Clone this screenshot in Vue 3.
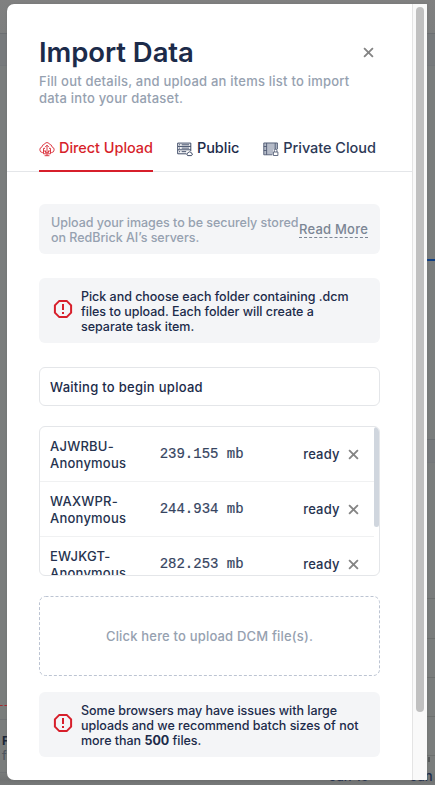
<script setup>
const files = [
  { id: 'AJWRBU-', size: '239.155 mb' },
  { id: 'WAXWPR-', size: '244.934 mb' },
  { id: 'EWJKGT-', size: '282.253 mb' },
]
</script>

<template>
  <div class="screen">
    <div class="page" aria-hidden="true">
      <div class="band band-top"></div>
      <div class="band band-mid"></div>
      <div class="blue-line"></div>
      <div class="grid"><i></i><i></i><i></i><i></i><i></i></div>
      <div class="red-line"></div>
      <div class="side-card"><b>F</b><span>f</span></div>
      <div class="date date-a">Jan 16</div>
      <div class="date date-b">Jan 17</div>
      <div class="tick"></div>
    </div>

    <section class="modal">
      <div class="body">
        <header class="head">
          <div class="title-row">
            <h1>Import Data</h1>
            <svg class="close" viewBox="0 0 10 10"><path d="M1 1L9 9M9 1L1 9" /></svg>
          </div>
          <p class="sub">Fill out details, and upload an items list to import<br />data into your dataset.</p>
        </header>

        <nav class="tabs">
          <div class="tab active">
            <svg class="icon" viewBox="0 0 16 16">
              <path d="M4.3 11.6H3.5A2.9 2.9 0 0 1 3 5.9 2.6 2.6 0 0 1 5.3 3.4 2.9 2.9 0 0 1 10.7 3.4 2.6 2.6 0 0 1 13 5.9 2.9 2.9 0 0 1 12.5 11.6H11.7" />
              <path d="M8 9V4.3M6 6.2L8 4.2l2 2M6 7.4H4.5v5.4h7V7.4H10M4.5 10h7M6.5 10v1.6h3V10M5.6 14.7h4.8M8 12.8v1.9" />
            </svg>
            <span>Direct Upload</span>
          </div>
          <div class="tab">
            <svg class="icon" viewBox="0 0 16 16">
              <path d="M.7 2.1h13.1v3.3H.7zM.7 5.4v3.4h13.1V5.4M.7 8.8v4h8.6M13.8 8.8v1.4M2 3.8h1.2M4.6 3.8h7.6M2 7.1h1.2M4.6 7.1h7.6M2 10.7h1.2M4.6 10.7h4.6" />
              <path d="M10.8 14.6a1.4 1.4 0 0 1 .3-2.7 1.6 1.6 0 0 1 3 0 1.4 1.4 0 0 1 .3 2.7z" />
            </svg>
            <span>Public</span>
          </div>
          <div class="tab private">
            <svg class="icon dim" viewBox="0 0 16 16">
              <path class="shade" d="M.5 1.8h14.2v7H10v5H.5z" />
              <path d="M.8 2h13.6v6M.8 2v11.8h8.4M3.6 2v11.8M.8 5.5h2.8M.8 9.5h2.8M12.2 2v6" />
              <path d="M10.4 11h4.5v3.5h-4.5zM11.3 11V9.5a1.3 1.3 0 0 1 2.6 0V11" />
            </svg>
            <span>Private Cloud</span>
          </div>
        </nav>

        <main class="content">
          <div class="info">
            <p>Upload your images to be securely stored<br />on RedBrick AI’s servers.</p>
            <a>Read More</a>
          </div>

          <div class="notice">
            <svg viewBox="0 0 20 20"><path d="M6.3 1.9h7.4l4.4 4.4v7.4l-4.4 4.4H6.3l-4.4-4.4V6.3z" /><path d="M10 5v6M10 13v2" /></svg>
            <p>Pick and choose each folder containing .dcm<br />files to upload. Each folder will create a<br />separate task item.</p>
          </div>

          <div class="status">Waiting to begin upload</div>

          <div class="files">
            <div class="rows">
              <div v-for="f in files" :key="f.id" class="row">
                <div class="name">{{ f.id }}<br />Anonymous</div>
                <div class="size">{{ f.size }}</div>
                <div class="ready">ready</div>
                <svg class="close" viewBox="0 0 10 10"><path d="M1 1L9 9M9 1L1 9" /></svg>
              </div>
            </div>
            <div class="files-thumb"></div>
          </div>

          <div class="drop">
            <svg class="dash"><rect x="0.5" y="0.5" width="340" height="79" rx="6" /></svg>
            <span>Click here to upload DCM file(s).</span>
          </div>

          <div class="notice last">
            <svg viewBox="0 0 20 20"><path d="M6.3 1.9h7.4l4.4 4.4v7.4l-4.4 4.4H6.3l-4.4-4.4V6.3z" /><path d="M10 5v6M10 13v2" /></svg>
            <p>Some browsers may have issues with large<br />uploads and we recommend batch sizes of not<br />more than <b>500</b> files.</p>
          </div>
        </main>
      </div>
      <div class="track"><div class="thumb"></div></div>
    </section>
  </div>
</template>

<style>
body { margin: 0; overflow: hidden; }
</style>

<style scoped>
* { box-sizing: border-box; }
h1, p { margin: 0; }
.screen {
  position: relative;
  width: 435px;
  height: 785px;
  overflow: hidden;
  padding: 4px 8px 5px 7px;
  background: #7c7e7e;
  color: #1c2b4a;
  font-family: Inter, "Liberation Sans", sans-serif;
  font-weight: 500;
  white-space: nowrap;
}
.page { position: absolute; inset: 0; background: linear-gradient(#808080, #7a7d7d 60px, #7a7d7c 770px, #717373 780px, #777979); }
.band { position: absolute; left: 0; right: 0; border-top: 1px solid #6c6f72; border-bottom: 1px solid #74777a; background: #777a7c; }
.band-top { top: 33px; height: 33px; }
.band-mid { top: 439px; height: 24px; left: 427px; }
.blue-line { position: absolute; left: 427px; right: 0; top: 259px; height: 2px; background: #103f83; }
.grid { position: absolute; left: 427px; right: 0; top: 560px; display: flex; flex-direction: column; }
.grid i { height: 39.3px; border-bottom: 1px solid #6d706f; }
.red-line { position: absolute; left: 0; top: 705px; width: 7px; border-top: 1px dashed #a52a30; }
.side-card { position: absolute; left: 0; top: 719px; width: 187px; height: 54px; padding: 13px 0 0 2px; border: 1px solid #707375; border-left: 0; display: flex; flex-direction: column; font-size: 12px; line-height: 15px; color: #1b2638; }
.side-card span { color: #4c555f; }
.date { position: absolute; top: 769px; font-size: 13px; line-height: 15px; }
.date-a { left: 329px; }
.date-b { left: 410px; }
.tick { position: absolute; left: 428px; top: 757px; width: 2px; height: 5px; background: #555858; }

.modal { position: relative; display: flex; width: 420px; height: 776px; border-radius: 7px 1px 1px 7px; overflow: hidden; background: #fff; box-shadow: 0 0 2px #6668; }
.body { width: 405px; }
.track { width: 15px; padding: 3px 3px 0; border-left: 1px solid #e4e4e4; background: #f9f9f9; }
.thumb { width: 8px; height: 705px; border-radius: 4px; background: #c0c0c0; }

.head { height: 125px; padding: 31px 32px 0; }
.title-row { display: flex; align-items: center; justify-content: space-between; height: 34px; padding-right: 6px; }
h1 { font-size: 27.5px; line-height: 34px; font-weight: 600; letter-spacing: -0.07px; }
.close { width: 11px; height: 11px; flex: none; fill: none; stroke: #858585; stroke-width: 1.7; }
.sub { margin-top: 4px; font-size: 13px; line-height: 17px; letter-spacing: 0.22px; color: #96a1b0; }

.tabs { display: flex; gap: 24px; height: 43px; padding: 0 32px; border-bottom: 1px solid #e4e6e9; }
.tab { display: flex; gap: 4px; height: 43px; padding-top: 9px; font-size: 14.5px; line-height: 20px; letter-spacing: -0.05px; }
.active { color: #d71f2b; border-bottom: 2px solid #d71f2b; }
.private { color: #2c3956; }
.icon { width: 16px; height: 16px; margin-top: 3px; flex: none; fill: none; stroke: currentColor; stroke-width: .85; }
.dim { opacity: .85; }
.shade { fill: #a9b0bf; stroke: none; }

.content { padding: 32px 32px 0; }
.info { display: flex; align-items: center; justify-content: space-between; height: 50px; padding: 2px 12px 0; border-radius: 6px; background: #f4f5f7; color: #96a1b0; font-size: 12.5px; line-height: 15px; letter-spacing: -0.03px; }
.info a { margin-top: -1px; border-bottom: 1px dashed #7b8594; color: #7b8594; font-size: 13px; line-height: 16px; letter-spacing: 0.22px; }
.notice { display: flex; align-items: center; gap: 8px; height: 65px; margin-top: 24px; padding: 0 14px; border-radius: 6px; background: #f4f5f7; font-size: 12.5px; line-height: 15px; letter-spacing: -0.025px; }
.notice p { padding-top: 2px; }
.notice svg { width: 20px; height: 20px; margin-top: -3px; flex: none; fill: none; stroke: #d71f2b; stroke-width: 2; }
.notice b { font-weight: 700; }
.status { height: 39px; margin-top: 24px; padding: 0 10px; border: 1px solid #e4e6e9; border-radius: 6px; font-size: 13px; line-height: 39px; letter-spacing: 0.28px; }
.files { display: flex; height: 150px; margin-top: 20px; border: 1px solid #e4e6e9; border-radius: 6px; overflow: hidden; }
.rows { width: 334px; }
.row { display: flex; align-items: center; height: 55px; padding: 0 15px 0 10px; border-bottom: 1px solid #f0f1f2; font-size: 13px; line-height: 17px; letter-spacing: 0.22px; color: #26334f; }
.name { width: 110px; padding-top: 1px; }
.size { width: 144px; padding-top: 1px; font-family: "Liberation Mono", monospace; font-size: 14px; letter-spacing: 0; -webkit-text-stroke: .2px #36445f; color: #36445f; }
.ready { width: 45px; }
.files-thumb { width: 5px; height: 100px; border-radius: 3px; background: #d0d6de; }
.drop { position: relative; display: flex; align-items: center; justify-content: center; height: 80px; margin-top: 20px; color: #96a1b0; font-size: 13px; line-height: 17px; letter-spacing: 0.18px; }
.dash { position: absolute; inset: 0; width: 341px; height: 80px; fill: none; stroke: #bcc4d2; stroke-dasharray: 3 2; }
.last { margin-top: 16px; }
</style>
